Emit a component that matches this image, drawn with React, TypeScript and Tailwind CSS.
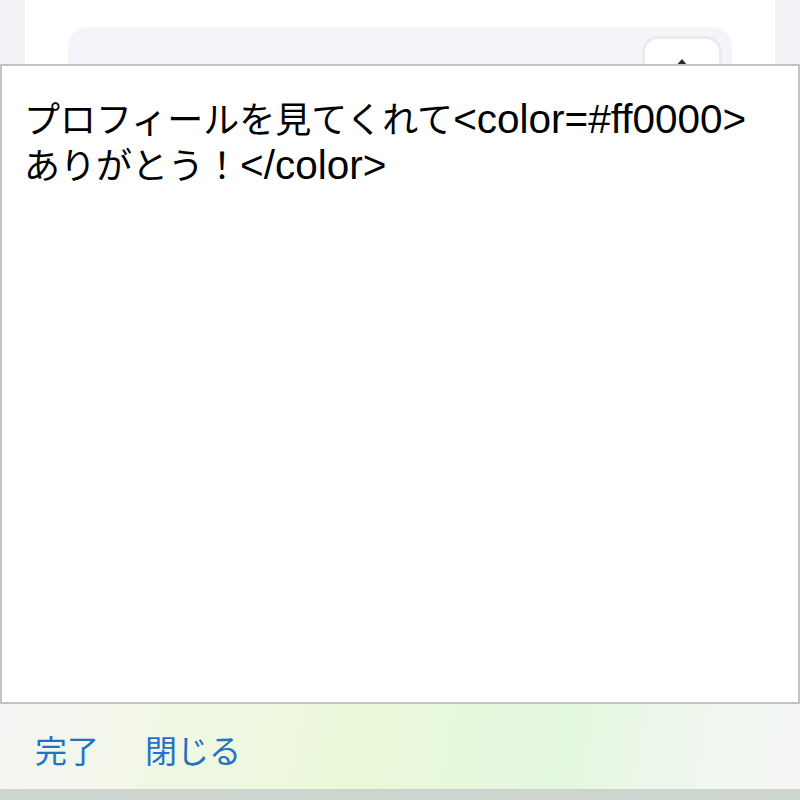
import React from "react";

const jp = { fontFamily: '"Noto Sans CJK JP", "Liberation Sans", sans-serif' };
const lat = { fontFamily: '"Liberation Sans", Arial, sans-serif' };

export default function App() {
  return (
    <div className="w-[800px] h-[800px] flex flex-col bg-white overflow-hidden" style={jp}>
      {/* background page peek */}
      <div className="h-[64px] shrink-0 bg-[#f2f2f6] px-[25px] overflow-hidden">
        <div className="h-full bg-white pl-[43px] pr-[43px] pt-[27px]">
          <div className="h-[80px] bg-[#f4f5f8] rounded-[20px] flex justify-end pr-[10px] pt-[9px]">
            <div className="w-[80px] h-[60px] rounded-[16px] border-[3px] border-[#ebebef] bg-white flex justify-center pt-[20px]">
              <svg width="14" height="10" viewBox="0 0 14 10">
                <path d="M7 0 L14 8 L0 8 Z" fill="#2a2a2a" />
              </svg>
            </div>
          </div>
        </div>
      </div>

      {/* text area */}
      <div className="h-[640px] shrink-0 border-2 border-[#c2c2c2] bg-white pl-[22px] pt-[32px] text-black">
        <div className="h-[46px] flex items-baseline whitespace-nowrap">
          <span className="text-[36px] leading-[38px]" style={jp}>プロフィールを見てくれて</span>
          <span className="text-[40.5px] leading-[38px]" style={lat}>&lt;color=#ff0000&gt;</span>
        </div>
        <div className="h-[46px] flex items-baseline whitespace-nowrap">
          <span className="text-[36px] leading-[38px]" style={jp}>ありがとう！</span>
          <span className="text-[40.5px] leading-[38px]" style={lat}>&lt;/color&gt;</span>
        </div>
      </div>

      {/* bottom toolbar */}
      <div className="h-[85px] shrink-0 bg-[linear-gradient(100deg,#f5f6f4_0%,#f0f7e2_25%,#eaf8d8_45%,#e4f7df_70%,#eef7ec_85%,#f4f5f4_100%)] flex items-center pl-[35px] gap-[46px] pt-[4px]">
        <span className="text-[32px] text-[#2272c3] leading-none" style={jp}>完了</span>
        <span className="text-[32px] text-[#2272c3] leading-none" style={jp}>閉じる</span>
      </div>
      <div className="flex-1 bg-[#cdd5cf]" />
    </div>
  );
}
